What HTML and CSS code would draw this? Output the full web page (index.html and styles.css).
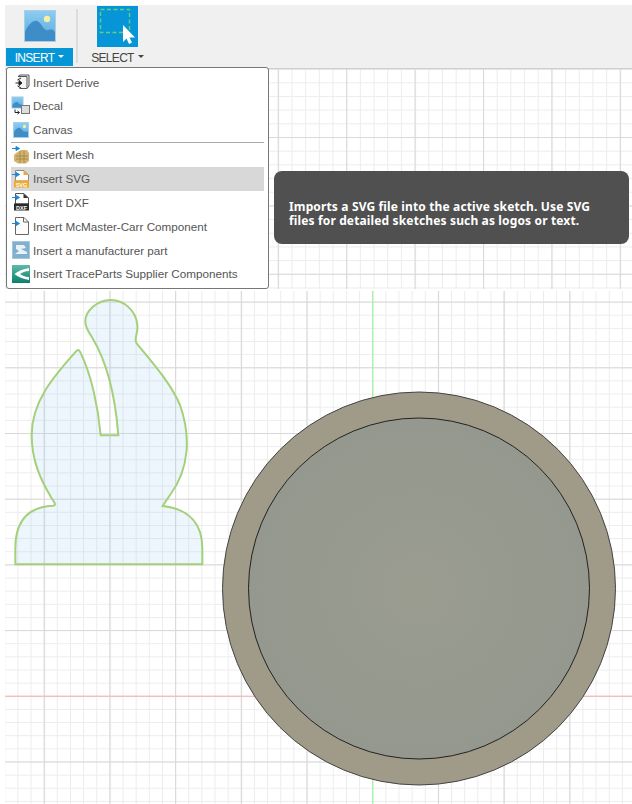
FILE: index.html
```html
<!DOCTYPE html>
<html lang="en">
<head>
<meta charset="utf-8">
<title>Insert SVG</title>
<link rel="stylesheet" href="styles.css">
</head>
<body>
<div class="app">
  <header class="toolbar">
    <div class="tool tool-insert">
      <div class="tool-icon">
        <svg width="32" height="32" viewBox="0 0 32 32">
          <rect x=".5" y=".5" width="31" height="31" fill="url(#sky)" stroke="#a9cfe8"/>
          <circle cx="23" cy="9" r="3.2" fill="#f4efa6"/>
          <path d="M1 31V22C4 15 9 10 13 11C17 12 19 19 22 20C25 21 27 17 31 22V31Z" fill="#3f8dc6"/>
        </svg>
      </div>
      <button class="tool-label active">INSERT<span class="caret"></span></button>
    </div>
    <div class="tool-sep"></div>
    <div class="tool tool-select">
      <div class="select-icon">
        <svg width="41" height="41" viewBox="0 0 41 41">
          <rect x="3.5" y="3.5" width="29" height="23" fill="none" stroke="#62cf80" stroke-width="1.4" stroke-dasharray="4 2.5"/>
          <path d="M26 19V36L29.500 32.500L32 38L35 36.500L32.500 31.500H38Z" fill="#fff"/>
        </svg>
      </div>
      <button class="tool-label">SELECT<span class="caret"></span></button>
    </div>
  </header>

  <main class="workspace">
    <svg class="grid grid-top" width="627" height="220">
      <defs>
        <linearGradient id="sky" x1="0" y1="0" x2="0" y2="1"><stop offset="0" stop-color="#8ccdf2"/><stop offset="1" stop-color="#5aa8dc"/></linearGradient>
        <pattern id="topMinor" width="13.68" height="13.68" patternUnits="userSpaceOnUse" x="-.8" y="-.4">
          <path d="M.5 0V13.68M0 .5H13.68" stroke="#ececec" fill="none"/>
        </pattern>
        <pattern id="topMajor" width="68.4" height="68.4" patternUnits="userSpaceOnUse" x="-.8" y="-.4">
          <path d="M.5 0V68.4M0 .5H68.4" stroke="#d9d9d9" stroke-width="1.2" fill="none"/>
        </pattern>
      </defs>
      <rect width="627" height="220" fill="url(#topMinor)"/>
      <rect width="627" height="220" fill="url(#topMajor)"/>
    </svg>

    <svg class="grid grid-bottom" width="627" height="513" viewBox="5 291 627 513">
      <defs>
        <pattern id="botMinor" width="13.14" height="13.14" patternUnits="userSpaceOnUse" x="372.2" y="695.8">
          <path d="M.5 0V13.14M0 .5H13.14" stroke="#ececec" fill="none"/>
        </pattern>
        <pattern id="botMajor" width="65.7" height="65.7" patternUnits="userSpaceOnUse" x="372.2" y="695.8">
          <path d="M.5 0V65.7M0 .5H65.7" stroke="#d8d8d8" stroke-width="1.2" fill="none"/>
        </pattern>
        <radialGradient id="disc" cx=".5" cy=".5" r=".6"><stop offset="0" stop-color="#9a9c90"/><stop offset="1" stop-color="#93978d"/></radialGradient>
      </defs>
      <rect x="5" y="291" width="627" height="513" fill="url(#botMinor)"/>
      <rect x="5" y="291" width="627" height="513" fill="url(#botMajor)"/>
      <path d="M372.700 291V804" stroke="#a4f5a4" stroke-width="1.2"/>
      <path d="M5 696.300H632" stroke="#f8bcbc" stroke-width="1.2"/>
      <g transform="translate(0 285) scale(.33333)">
        <path class="bishop" d="M46 838H607V790C607 720 570 672 488 663L510 630C570 550 572 450 540 360C510 290 450 225 410 175C400 160 415 150 412 120C408 75 370 45 333 45C290 45 255 80 256 110C256 125 265 140 275 155C315 220 345 320 355 451H302C295 370 275 270 240 200C236 193 232 194 228 199C160 275 95 350 95 450C95 530 125 590 155 640C162 650 170 660 160 662C90 665 46 700 46 790Z"/>
      </g>
      <circle class="disc-outer" cx="419" cy="588.500" r="196.500"/>
      <circle class="disc-inner" cx="419" cy="588.500" r="170.500" fill="url(#disc)"/>
    </svg>

    <div class="menu">
      <div class="menu-row">
        <svg class="menu-icon" viewBox="0 0 18 18"><path d="M6 3.500L8 2H17V13L15 15.500H7.500" fill="#f4f4f4" stroke="#555"/><path d="M6 3.500H15V15.500" fill="none" stroke="#555"/><path d="M3.500 10H9M7 7.500L10 10L7 12.500Z" stroke="#222" fill="#222"/><path d="M5.500 7L9 5M5.500 13L9 15" stroke="#222"/></svg>
        <span>Insert Derive</span>
      </div>
      <div class="menu-row">
        <svg class="menu-icon" viewBox="0 0 18 18"><rect y="0" width="11" height="11" fill="url(#sky)" stroke="#9cc7e3"/><path d="M.5 10.500V8C3 5 5 4 6.500 6C8 8 9 7 10.500 8V10.500Z" fill="#3f8dc6"/><rect x="9.500" y="8.500" width="8" height="8" fill="#ddd" stroke="#777"/><path d="M3 12.500V15.500H7M5.500 14L7.500 15.500L5.500 17" fill="none" stroke="#222"/></svg>
        <span>Decal</span>
      </div>
      <div class="menu-row">
        <svg class="menu-icon" viewBox="0 0 18 18"><rect x="1.500" y="1.500" width="15" height="15" fill="url(#sky)" stroke="#a9cfe8"/><circle cx="12.500" cy="5.500" r="1.700" fill="#f4efa6"/><path d="M2 16V11C4 8 6 6 8 7C10 8 10.500 10 12 10.500C14 11 15 10 16 11V16Z" fill="#3f8dc6"/></svg>
        <span>Canvas</span>
      </div>
      <div class="menu-sep"></div>
      <div class="menu-row">
        <svg class="menu-icon" viewBox="0 0 18 18"><path d="M4 7L9 4H15L17 7V15L14 17.500H6L2 15V9Z" fill="#d2b370"/><path d="M4 10H16M4 13H16M8 5V17M12 5V17" stroke="#a88a4c" fill="none"/><path d="M0 2.500H6M4 .5L7.500 2.500L4 4.500Z" stroke="#1b87d6" fill="#1b87d6"/></svg>
        <span>Insert Mesh</span>
      </div>
      <div class="menu-row is-active">
        <svg class="menu-icon" viewBox="0 0 18 18"><path d="M3.500 .5H12L16.500 5V11H3.500Z" fill="#fff" stroke="#888"/><path d="M11.500 .5V5H16.500Z" fill="#eea92f"/><rect x="2" y="10.500" width="15" height="7" fill="#eea92f"/><text class="icon-text" x="9.500" y="16.500">SVG</text><path d="M0 4.500H6M4 2.500L7.500 4.500L4 6.500Z" stroke="#1b87d6" fill="#1b87d6"/></svg>
        <span>Insert SVG</span>
      </div>
      <div class="menu-row">
        <svg class="menu-icon" viewBox="0 0 18 18"><path d="M3.500 .5H12L16.500 5V11H3.500Z" fill="#fff" stroke="#555"/><path d="M11.500 .5V5H16.500Z" fill="#333"/><rect x="2" y="10.500" width="15" height="7" fill="#2b2b2b"/><text class="icon-text" x="9.500" y="16.500">DXF</text><path d="M0 4.500H6M4 2.500L7.500 4.500L4 6.500Z" stroke="#1b87d6" fill="#1b87d6"/></svg>
        <span>Insert DXF</span>
      </div>
      <div class="menu-row">
        <svg class="menu-icon" viewBox="0 0 18 18"><path d="M3.500 .5H12L16.500 5V17.500H3.500Z" fill="#fcfcfc" stroke="#666"/><path d="M11.500 .5V5H16.500" fill="none" stroke="#666"/><path d="M0 6.500H6M4 4.500L7.500 6.500L4 8.500Z" stroke="#1b87d6" fill="#1b87d6"/></svg>
        <span>Insert McMaster-Carr Component</span>
      </div>
      <div class="menu-row">
        <svg class="menu-icon" viewBox="0 0 18 18"><rect x=".5" y=".5" width="17" height="17" fill="#7fb0d0" stroke="#a5c6dc"/><path d="M4 4H12L14 7L9 8L15 11V13H3L7 10L4 8Z" fill="#e8f1f6"/></svg>
        <span>Insert a manufacturer part</span>
      </div>
      <div class="menu-row">
        <svg class="menu-icon" viewBox="0 0 18 18"><rect width="18" height="18" fill="url(#trace)"/><defs><linearGradient id="trace" x1="0" y1="0" x2="0" y2="1"><stop offset="0" stop-color="#5cbca8"/><stop offset="1" stop-color="#0b7f6c"/></linearGradient></defs><path d="M17 3C11 4 6 6 2.500 9C6 12 11 14 17 15V12C13 12 10 10.500 8 9C10 7.500 13 6 17 6Z" fill="#fff"/></svg>
        <span>Insert TraceParts Supplier Components</span>
      </div>
    </div>

    <aside class="tooltip">Imports a SVG file into the active sketch. Use SVG files for detailed sketches such as logos or text.</aside>
  </main>
</div>
</body>
</html>
```
FILE: styles.css
```css
* { box-sizing: border-box; }
html, body { margin: 0; height: 100%; overflow: hidden; background: #fff; }
body { font-family: "Liberation Sans", Arial, sans-serif; font-size: 11.700px; color: #555; }

.app { display: flex; flex-direction: column; height: 804px; padding: 5px 0 0 5px; }

.toolbar {
  display: flex; align-items: stretch; height: 64px; flex: none;
  background: #f0f0f0; border-bottom: 1px solid #cfcfcf;
}
.tool { display: flex; flex-direction: column; align-items: center; }
.tool-insert { width: 67px; margin-left: 1px; }
.tool-icon { height: 43px; padding-top: 5px; }
.tool-icon svg, .select-icon svg { display: block; }
.tool-label {
  display: flex; align-items: center; justify-content: center; width: 100%; height: 18px;
  margin: 0; padding: 2px 0 0; border: 0; background: none;
  font: 12px "Liberation Sans", Arial, sans-serif; letter-spacing: -.7px; color: #444;
}
.tool-label.active { background: #0696d7; color: #fff; }
.caret {
  width: 0; height: 0; margin-left: 4px; margin-bottom: 3px;
  border: 3.500px solid transparent; border-top-color: currentColor; border-bottom: 0;
}
.tool-sep { width: 2px; margin: 4px 0 5px 3px; background: #dcdcdc; }
.tool-select { width: 55px; margin-left: 12px; }
.select-icon { width: 41px; height: 41px; margin: 1px 0 1px; background: #0696d7; }

.workspace { position: relative; flex: 1; display: flex; flex-direction: column; gap: 2px; background: #fff; }
.grid { display: block; flex: none; }

.bishop { fill: rgba(140, 200, 240, .16); stroke: #a4d07a; stroke-width: 6; }
.disc-outer { fill: #a09a89; stroke: #444; stroke-width: 1; }
.disc-inner { stroke: #222; stroke-width: 1; }

.menu {
  position: absolute; left: 1px; top: -2px; width: 263px; height: 222px;
  padding: 2.200px 4px 0; background: #fff; border: 1px solid #777; border-radius: 3px;
}
.menu-row { display: flex; align-items: center; gap: 3px; height: 23.800px; padding-left: 1px; white-space: nowrap; }
.menu-row.is-active { background: #d8d8d8; }
.menu-icon { width: 18px; height: 18px; flex: none; overflow: visible; }
.icon-text { font: 700 5.500px "Liberation Sans", sans-serif; fill: #fff; text-anchor: middle; }
.menu-sep { height: 1.400px; background: #aaa; }

.tooltip {
  position: absolute; left: 269px; top: 102px; width: 355px; height: 73px;
  padding: 29px 30px 0 15px; background: #505050; border-radius: 8px;
  font-family: "Noto Sans", sans-serif; font-size: 12px; font-weight: 700; letter-spacing: .14px; line-height: 14px; color: #fff;
}
```
